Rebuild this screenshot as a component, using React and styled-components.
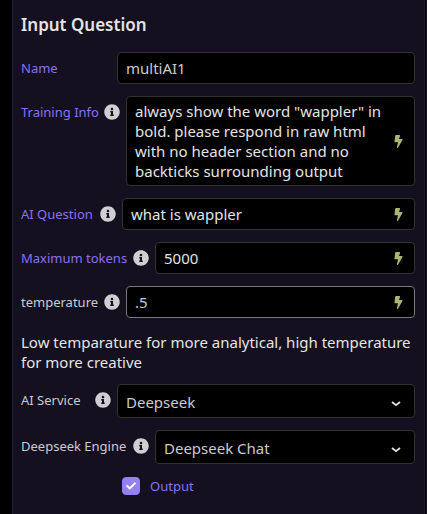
import React, { useState } from 'react';
import styled, { createGlobalStyle, css } from 'styled-components';
import { FaBolt, FaCheck, FaInfoCircle } from 'react-icons/fa';

const colors = {
  page: '#000000',
  panel: '#14101f',
  edge: '#1e1a30',
  field: '#000000',
  border: '#333333',
  borderActive: '#77777a',
  text: '#e4e4e4',
  muted: '#cbcbcd',
  accent: '#8a70f0',
  checkbox: '#9580f2',
  info: '#d0ced3',
  bolt: '#abb476',
};

const GlobalStyle = createGlobalStyle`
  * {
    box-sizing: border-box;
  }

  body {
    margin: 0;
    background: ${colors.page};
    color: ${colors.text};
    font-family: 'Noto Sans', 'Open Sans', sans-serif;
    font-size: 15px;
  }
`;

const Layout = styled.div`
  display: flex;
  min-height: 100vh;
  padding-left: 12px;
`;

const Panel = styled.form`
  flex: 1;
  min-width: 0;
  padding: 12px 9px 12px 8px;
  background: ${colors.panel};
  border: solid ${colors.edge};
  border-width: 0 1px;
`;

const NextPanel = styled.div`
  width: 1px;
  margin-left: 1px;
  background: ${colors.panel};
`;

const Title = styled.h2`
  margin: 0 0 14px;
  font-size: 17px;
  font-weight: 600;
  line-height: 26px;
`;

const Row = styled.div`
  display: flex;
  align-items: flex-start;
  margin-bottom: 12px;
`;

const LabelCell = styled.div`
  flex: 0 0 ${({ $width }) => $width}px;
  display: flex;
  align-items: center;
  justify-content: space-between;
  height: 32px;
  padding-right: 6px;
  color: ${colors.info};
`;

const Label = styled.label`
  color: ${({ $accent }) => ($accent ? colors.accent : colors.muted)};
  font-size: 13px;
  white-space: nowrap;
`;

const FieldWrapper = styled.div`
  position: relative;
  flex: 1;
  min-width: 0;
  display: flex;
`;

const fieldStyle = css`
  width: 100%;
  height: 32px;
  margin: 0;
  padding: 0 32px 0 8px;
  border: 1px solid
    ${({ $active }) => ($active ? colors.borderActive : colors.border)};
  border-radius: 4px;
  outline: none;
  background: ${colors.field};
  color: ${({ $muted }) => ($muted ? colors.muted : colors.text)};
  font: inherit;
`;

const Input = styled.input`
  ${fieldStyle}
`;

const TextArea = styled.textarea`
  ${fieldStyle}
  height: 90px;
  padding-top: 4px;
  line-height: 20px;
  resize: none;
  overflow: hidden;
`;

const Select = styled.select`
  ${fieldStyle}
  height: 34px;
  padding-top: 2px;
  appearance: none;
`;

const FieldIcon = styled.span`
  position: absolute;
  top: 0;
  right: 10px;
  bottom: 0;
  display: flex;
  align-items: center;
  color: ${({ $color }) => $color};
  pointer-events: none;
`;

const Hint = styled.p`
  margin: 14px 0 12px;
  line-height: 20px;
`;

const CheckRow = styled.div`
  display: flex;
  align-items: center;
  gap: 10px;
  min-height: 20px;
  padding-left: 101px;
`;

const CheckWrapper = styled.span`
  position: relative;
  display: flex;
  width: 18px;
  height: 18px;

  svg {
    position: absolute;
    top: 4px;
    left: 4px;
    color: #ffffff;
    pointer-events: none;
  }
`;

const Checkbox = styled.input`
  appearance: none;
  width: 18px;
  height: 18px;
  margin: 0;
  border: 1px solid ${colors.checkbox};
  border-radius: 4px;

  &:checked {
    background: ${colors.checkbox};
  }
`;

const Chevron = () => (
  <svg width='14' height='12' viewBox='0 0 14 12' fill='none'>
    <path d='M1 7 L5 10.2 L9 7' stroke='currentColor' strokeWidth='1.8' />
  </svg>
);

const Field = ({ id, label, width, accent, info, icon, iconColor, children }) => (
  <Row>
    <LabelCell $width={width}>
      <Label htmlFor={id} $accent={accent}>
        {label}
      </Label>
      {info && <FaInfoCircle size={16} />}
    </LabelCell>
    <FieldWrapper>
      {children}
      {icon && <FieldIcon $color={iconColor}>{icon}</FieldIcon>}
    </FieldWrapper>
  </Row>
);

const bolt = { icon: <FaBolt size={13} />, iconColor: colors.bolt };
const chevron = { icon: <Chevron />, iconColor: colors.text };

const App = () => {
  const [output, setOutput] = useState(true);

  return (
    <>
      <GlobalStyle />
      <Layout>
        <Panel>
          <Title>Input Question</Title>
          <Field id='name' label='Name' width={96} accent>
            <Input id='name' defaultValue='multiAI1' $muted />
          </Field>
          <Field id='training' label='Training Info' width={105} accent info {...bolt}>
            <TextArea
              id='training'
              defaultValue='always show the word "wappler" in bold. please respond in raw html with no header section and no backticks surrounding output'
            />
          </Field>
          <Field id='question' label='AI Question' width={101} accent info {...bolt}>
            <Input id='question' defaultValue='what is wappler' />
          </Field>
          <Field id='tokens' label='Maximum tokens' width={134} accent info {...bolt}>
            <Input id='tokens' defaultValue='5000' />
          </Field>
          <Field id='temperature' label='temperature' width={105} info {...bolt}>
            <Input id='temperature' defaultValue='.5' $active $muted />
          </Field>
          <Hint>
            Low temparature for more analytical, high temperature for more creative
          </Hint>
          <Field id='service' label='AI Service' width={96} info {...chevron}>
            <Select id='service' $muted>
              <option>Deepseek</option>
            </Select>
          </Field>
          <Field id='engine' label='Deepseek Engine' width={134} info {...chevron}>
            <Select id='engine' $muted>
              <option>Deepseek Chat</option>
            </Select>
          </Field>
          <CheckRow>
            <CheckWrapper>
              <Checkbox
                id='output'
                type='checkbox'
                checked={output}
                onChange={(e) => setOutput(e.target.checked)}
              />
              {output && <FaCheck size={10} />}
            </CheckWrapper>
            <Label htmlFor='output' $accent>
              Output
            </Label>
          </CheckRow>
        </Panel>
        <NextPanel />
      </Layout>
    </>
  );
};

export default App;
